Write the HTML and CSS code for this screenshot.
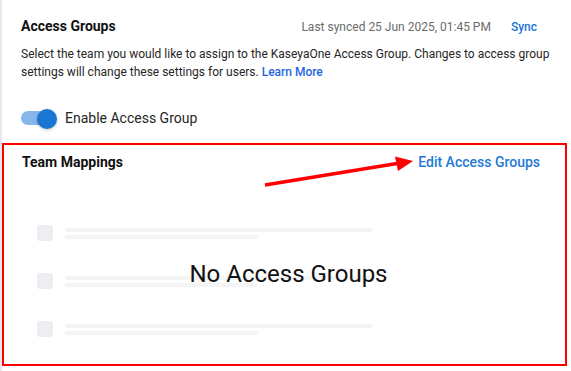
FILE: index.html
```html
<!DOCTYPE html>
<html>
<head>
    <title>Access Groups</title>
    <link rel="stylesheet" href="styles.css">
</head>
<body>
    <div class="page">
        <div class="settings">
            <div class="header">
                <h2 class="title">Access Groups</h2>
                <div class="sync-info">
                    <span class="synced">Last synced 25 Jun 2025, 01:45 PM</span>
                    <a href="#" class="sync">Sync</a>
                </div>
            </div>
            <p class="description">Select the team you would like to assign to the KaseyaOne Access Group. Changes to access group settings will change these settings for users. <a href="#" class="learn">Learn More</a></p>
            <label class="toggle-row">
                <span class="switch">
                    <span class="track"></span>
                    <span class="thumb"></span>
                </span>
                <span class="toggle-label">Enable Access Group</span>
            </label>
        </div>

        <div class="mappings">
            <div class="mappings-head">
                <h3 class="title">Team Mappings</h3>
                <a href="#" class="edit">Edit Access Groups</a>
            </div>
            <div class="list">
                <div class="skeleton-row">
                    <span class="box"></span>
                    <div class="lines">
                        <span class="line long"></span>
                        <span class="line short"></span>
                    </div>
                </div>
                <div class="skeleton-row">
                    <span class="box"></span>
                    <div class="lines">
                        <span class="line long"></span>
                        <span class="line short"></span>
                    </div>
                </div>
                <div class="skeleton-row">
                    <span class="box"></span>
                    <div class="lines">
                        <span class="line long"></span>
                        <span class="line short"></span>
                    </div>
                </div>
                <div class="empty">No Access Groups</div>
            </div>

            <!-- annotation arrow -->
            <svg class="arrow" width="561" height="60" viewBox="0 0 561 60">
                <line x1="261" y1="40" x2="393" y2="18.6" stroke="#ff0000" stroke-width="3.5"/>
                <polygon points="409,16 391,11.5 394,26" fill="#ff0000"/>
            </svg>
        </div>
    </div>
</body>
</html>
```

FILE: styles.css
```css
body {
    font-family: Roboto, "Liberation Sans", sans-serif;
    margin: 0;
    background-color: white;
    color: #222;
}
a {
    text-decoration: none;
}
.page {
    border-left: 2px solid #e6e9ed;
    min-height: 100vh;
    box-sizing: border-box;
}
.settings {
    padding: 16px 16px 0 19px;
}
.header {
    display: flex;
    justify-content: space-between;
    align-items: baseline;
}
.title {
    margin: 0;
    font-size: 14px;
    line-height: 20px;
    font-weight: 700;
    color: #111;
}
.sync-info {
    display: flex;
    align-items: baseline;
    gap: 20px;
    font-size: 12px;
}
.synced {
    color: #6b6b6b;
}
.sync {
    color: #1a73d9;
    font-weight: 500;
    margin-right: 18px;
}
.description {
    margin: 9px 0 0;
    font-size: 12px;
    line-height: 18px;
    color: #262626;
}
.learn {
    color: #1f66e0;
    font-weight: 500;
}
.toggle-row {
    display: flex;
    align-items: center;
    gap: 8px;
    margin-top: 25px;
    height: 24px;
}
.switch {
    position: relative;
    width: 36px;
    height: 20px;
    display: flex;
    align-items: center;
}
.track {
    width: 34px;
    height: 14px;
    border-radius: 7px;
    background-color: #86b6ea;
}
.thumb {
    position: absolute;
    right: 0;
    top: 1px;
    width: 20px;
    height: 20px;
    border-radius: 50%;
    background-color: #1976d2;
    box-shadow: 0 1px 3px rgba(0, 0, 0, 0.25);
}
.toggle-label {
    font-size: 14px;
    color: #262626;
}
.mappings {
    position: relative;
    border: 2px solid #ff0000;
    margin: 13px 4px 0 0;
    padding: 7px 25px 27px 18px;
}
.mappings-head {
    display: flex;
    justify-content: space-between;
    align-items: baseline;
}
.edit {
    color: #2479d6;
    font-size: 14px;
    font-weight: 500;
}
.list {
    position: relative;
    display: flex;
    flex-direction: column;
    gap: 32px;
    margin-top: 53px;
    padding-left: 15px;
}
.skeleton-row {
    display: flex;
    gap: 12px;
    height: 16px;
}
.box {
    width: 16px;
    height: 16px;
    border-radius: 3px;
    background-color: #eceef1;
}
.lines {
    display: flex;
    flex-direction: column;
    gap: 3px;
    padding-top: 3px;
}
.line {
    height: 4px;
    background-color: #f4f4f5;
}
.long {
    width: 307px;
}
.short {
    width: 193px;
}
.empty {
    position: absolute;
    top: 35px;
    left: 15px;
    right: 0;
    text-align: center;
    font-size: 24px;
    color: #111;
}
.arrow {
    position: absolute;
    left: 0;
    top: 0;
    pointer-events: none;
}
```
